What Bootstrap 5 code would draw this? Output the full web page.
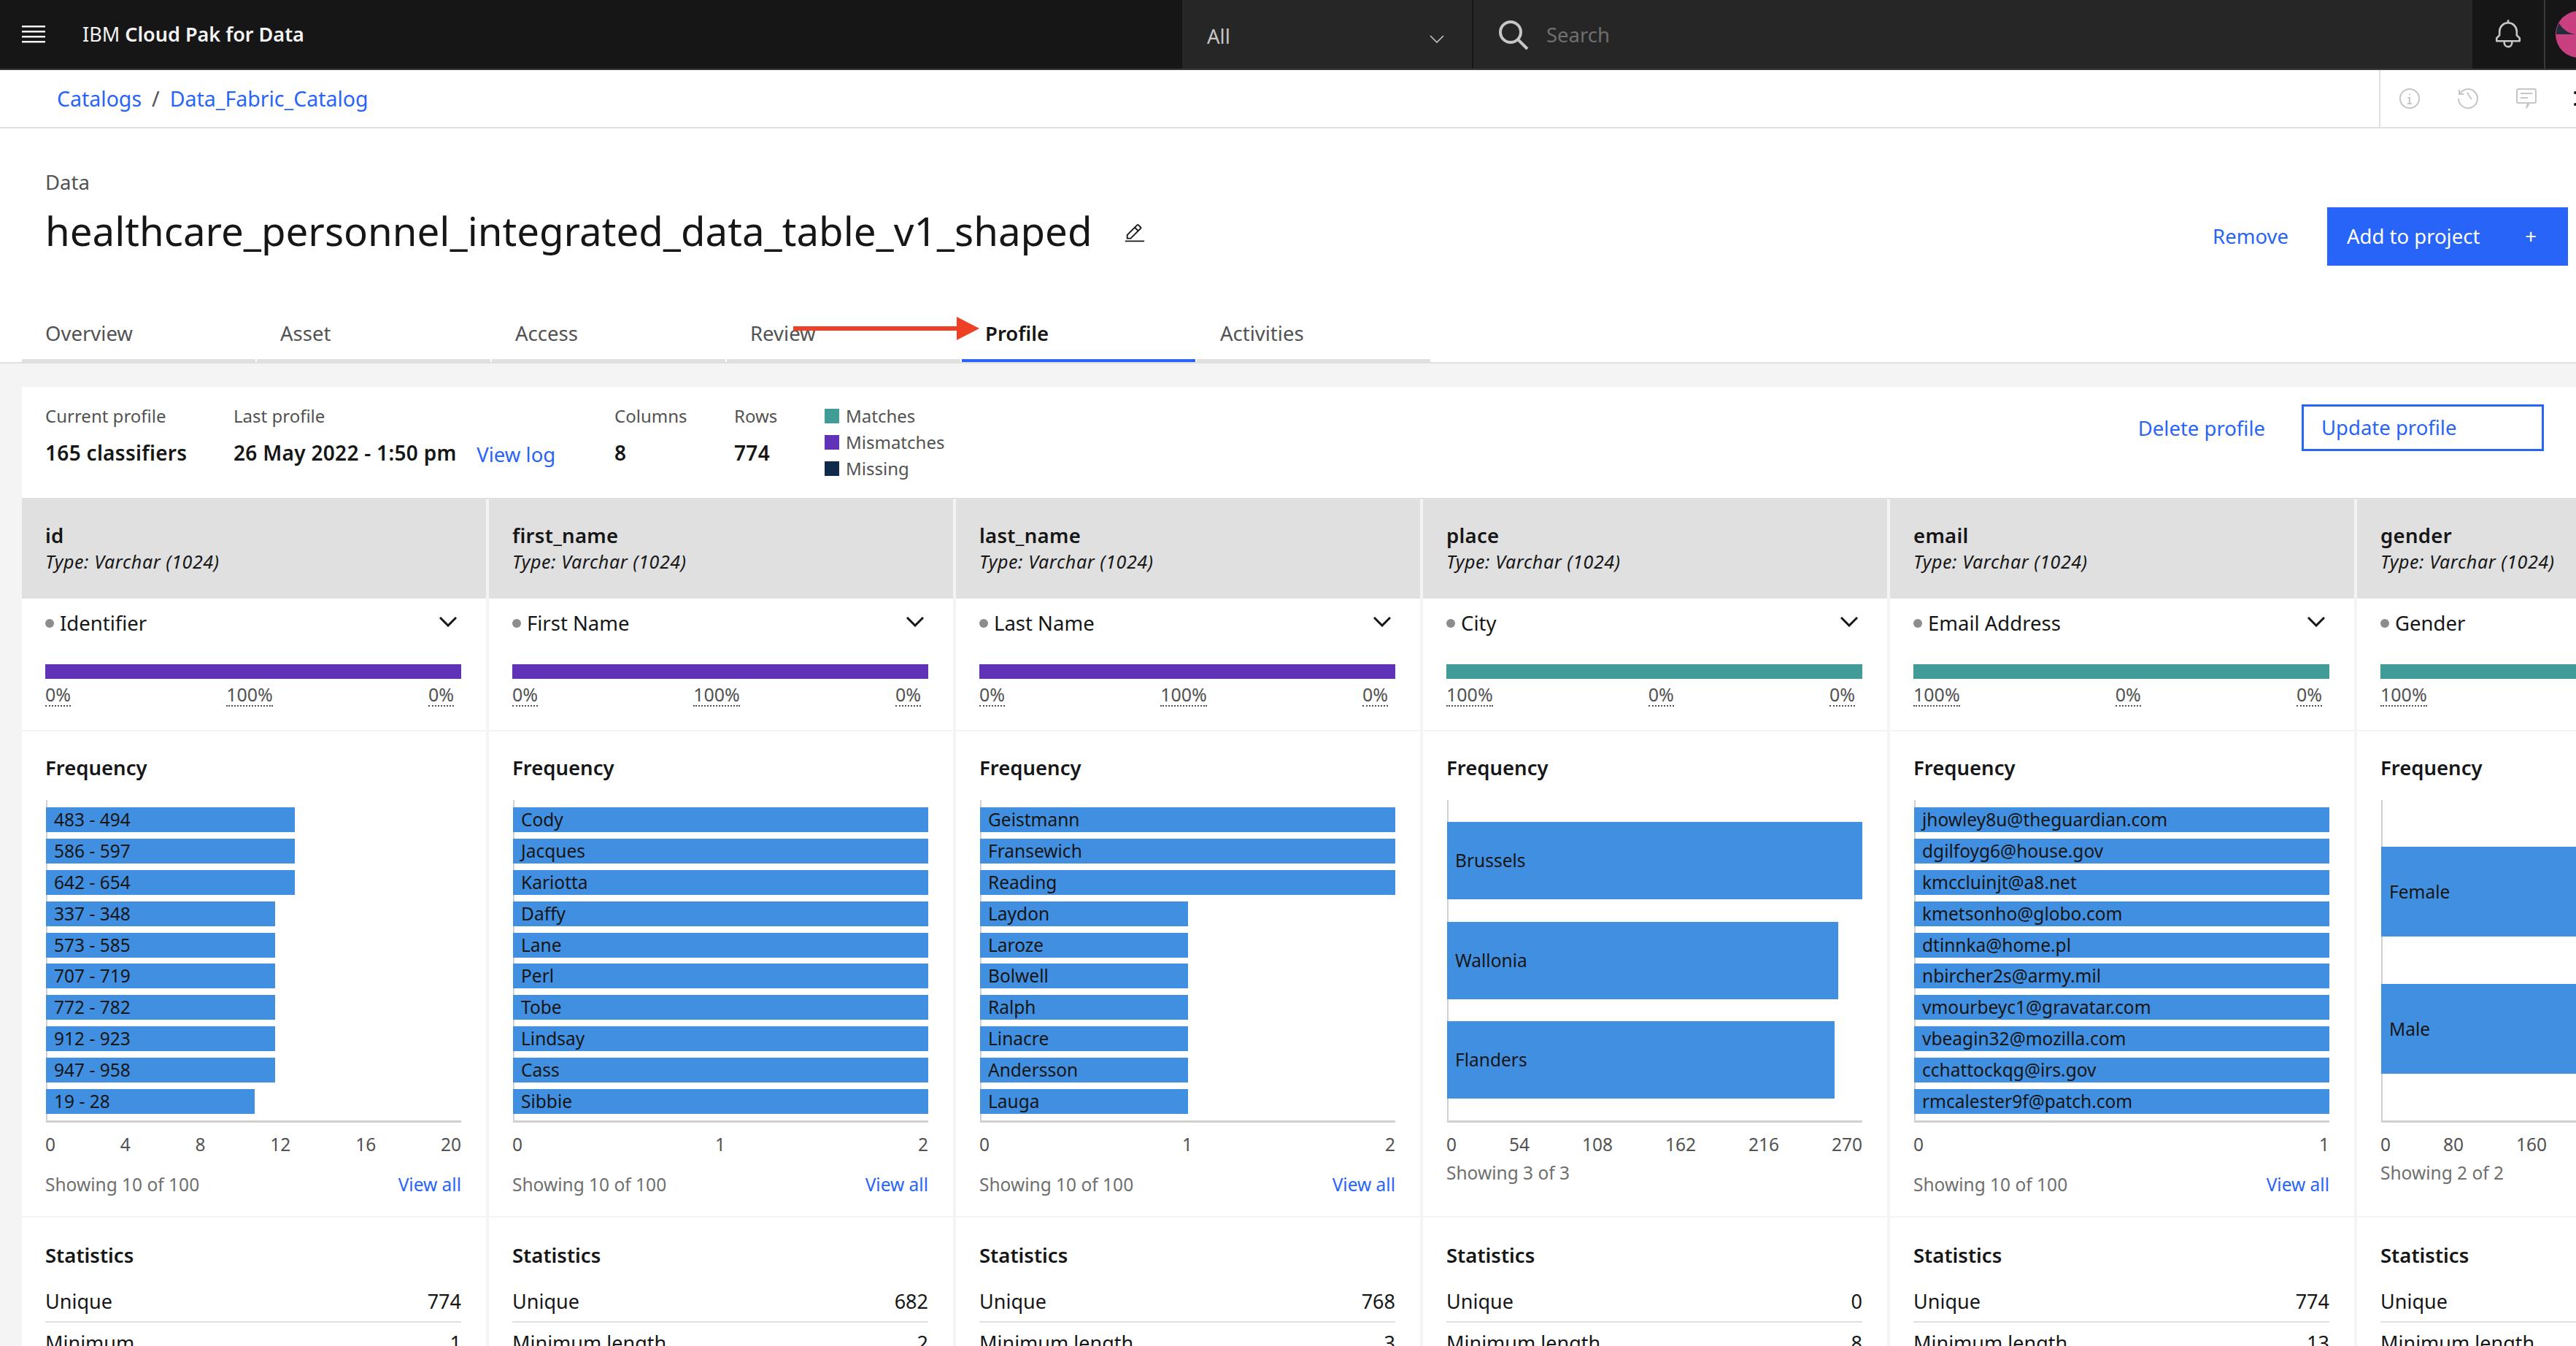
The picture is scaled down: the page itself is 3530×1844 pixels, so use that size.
<!DOCTYPE html>
<html lang="en">
<head>
<meta charset="utf-8">
<title>Profile</title>
<link href="https://cdn.jsdelivr.net/npm/bootstrap@5.3.0/dist/css/bootstrap.min.css" rel="stylesheet">
<style>
html,body{height:1844px;overflow:hidden}
body{font-family:"Noto Sans","Liberation Sans",sans-serif;font-size:27.5px;line-height:36px;color:#161616;background:#fff;position:relative}
a{color:#2864f8;text-decoration:none}
.b{font-weight:600}
.topbar{height:96px;background:#161616;border-bottom:2px solid #393939;color:#f4f4f4}
.topbar>*{flex:none}
.burger{width:32px;margin-left:30px}
.brand{margin-left:51px;width:1507px;font-size:27px}
.brand span{font-weight:600}
.scope{width:399px;height:94px;background:#262626;border-right:2px solid #161616;padding:32px 38px 0 34px;color:#c6c6c6}
.search{width:1369px;height:94px;background:#262626;padding:2px 0 0 34px;color:#6f6f6f}
.bell{width:100px;height:94px;border-right:2px solid #393939}
.avatar{margin-left:14px}
.crumbs{height:80px;border-bottom:2px solid #e0e0e0}
.crumbs .breadcrumb{--bs-breadcrumb-divider-color:#525252;--bs-breadcrumb-item-active-color:#2864f8;--bs-breadcrumb-item-padding-x:14px;margin:0 0 0 78px;font-size:28.5px}
.tools{width:270px;height:78px;border-left:2px solid #e0e0e0;padding-left:25px;gap:50px;overflow:hidden}
.tools svg{flex:none}
.head{height:240px;padding:58px 11px 0 62px}
.kicker{color:#525252;line-height:32px}
.title{font-size:54.6px;line-height:72px;margin:14px 0 0;font-weight:400}
.title svg{margin-left:44px;vertical-align:2px}
.remove{margin:72px 53px 0 0}
.cta{--bs-btn-bg:#2864f8;--bs-btn-border-color:#2864f8;--bs-btn-border-radius:0;width:330px;height:80px;padding:0 42px 0 26px;font-size:27.5px;margin-top:50px}
.tabbar{height:82px;padding-left:30px;gap:2px;border-bottom:2px solid #e0e0e0}
.tabbar .nav-link{width:320px;height:80px;padding:23px 0 0 32px;color:#525252;border-bottom:4px solid #e0e0e0}
.tabbar .nav-link.active{color:#161616;font-weight:600;border-bottom-color:#2864f8}
.arrow{position:absolute;left:1087px;top:434px}
.content{background:#f4f4f4;padding:32px 0 0 30px;height:1346px}
.panel{background:#fff;height:100%;overflow:hidden}
.summary{height:152px;padding:24px 44px 0 32px}
.small-t{font-size:24px;line-height:32px;color:#525252}
.val{font-weight:600;font-size:28px;letter-spacing:.3px;line-height:36px;margin-top:16px}
.s1{width:258px}.s2{width:522px}.s3{width:164px}.s4{width:124px}
.log{margin-left:20px;position:relative;top:2px;letter-spacing:0;font-size:27.5px}
.swatch{width:20px;height:20px;margin-right:9px;flex:none}
.legend{margin-top:-2px}
.legend div{height:36px}
.del{margin:15px 50px 0 0}
.upd{width:332px;height:64px;border:3px solid #2864f8;padding:0 0 0 24px}
.cols{gap:4px;background:#f4f4f4;border-top:2px solid #e0e0e0;width:3600px}
.col6{flex:0 0 636px;background:#fff}
.chead{height:136px;background:#e0e0e0;padding:32px 32px 0}
.chead .b{letter-spacing:.3px}
.chead .type{font-size:25px;letter-spacing:.6px;line-height:32px;font-style:italic;margin-top:1px;white-space:nowrap}
.cclass{height:182px;padding:16px 34px 0 32px;border-bottom:2px solid #f4f4f4}
.dot{width:12px;height:12px;background:#8d8d8d;margin-right:8px;flex:none}
.chev{margin:0 6px 4px auto}
.meter{height:20px;margin-top:38px}
.match{background:#419c98}.mis{background:#6032b8}.miss{background:#0f2a4a}
.pcts{font-size:25px;line-height:30px;color:#525252;margin-top:6px;padding-right:10px}
.pcts span{border-bottom:2px dotted #525252}
.cfreq{height:666px;padding:32px 34px 0 32px;border-bottom:2px solid #f4f4f4}
.chart{height:442px;margin:26px 0 0 1px;border-left:2px solid #d0d0d0;border-bottom:3px solid #d0d0d0}
.bars{height:100%;margin-left:-2px;padding:10px 0 9px}
.bar{height:34px;background:#418fe0;font-size:24.5px;line-height:34px;padding-left:11px;white-space:nowrap}
.bar.m{height:106px;line-height:106px}.bar.l{height:123px;line-height:123px}
.ticks{font-size:24.5px;line-height:30px;color:#525252;margin-top:15px}
.foot{font-size:24.5px;line-height:30px;color:#6f6f6f;margin-top:25px}
.foot.near{margin-top:9px}
.cstats{padding:34px 34px 0 32px}
.stat{height:44px;border-bottom:2px solid #e0e0e0;margin-top:30px;line-height:30px;font-size:27px}
.stat+.stat{margin-top:13px;height:auto;border:0}
.fade{position:absolute;left:0;right:0;bottom:0;height:64px;background:linear-gradient(to bottom,rgba(0,0,0,0),rgba(0,0,0,.07));border-bottom:4px solid #e6e6e6;pointer-events:none}
</style>
</head>
<body>
<header class="topbar d-flex align-items-center overflow-hidden">
  <svg class="burger" height="24" viewBox="0 0 32 24" fill="#f4f4f4"><rect y="0" width="32" height="2.5"/><rect y="7" width="32" height="2.5"/><rect y="14" width="32" height="2.5"/><rect y="21" width="32" height="2.5"/></svg>
  <div class="brand">IBM <span>Cloud Pak for Data</span></div>
  <div class="scope d-flex justify-content-between"><span>All</span><svg class="mt-3" width="20" height="11" viewBox="0 0 20 11" fill="none" stroke="#c6c6c6" stroke-width="1.6"><path d="M1 1l9 9 9-9"/></svg></div>
  <div class="search d-flex align-items-center gap-4"><svg width="42" height="42" viewBox="0 0 42 42" fill="none" stroke="#c6c6c6" stroke-width="4"><circle cx="17" cy="17" r="14"/><path d="M27 27l13 13"/></svg><span>Search</span></div>
  <div class="bell d-flex align-items-center justify-content-center"><svg width="42" height="42" viewBox="0 0 32 32" fill="#c6c6c6"><path d="M28.707 19.293 26 16.586V13a10.014 10.014 0 0 0-9-9.95V1h-2v2.05A10.014 10.014 0 0 0 6 13v3.586l-2.707 2.707A1 1 0 0 0 3 20v3a1 1 0 0 0 1 1h7v.777a5.152 5.152 0 0 0 4.5 5.199A5.006 5.006 0 0 0 21 25v-1h7a1 1 0 0 0 1-1v-3a1 1 0 0 0-.293-.707ZM19 25a3 3 0 0 1-6 0v-1h6Zm8-3H5v-1.586l2.707-2.707A1 1 0 0 0 8 17v-4a8 8 0 0 1 16 0v4a1 1 0 0 0 .293.707L27 20.414Z"/></svg></div>
  <svg class="avatar" width="64" height="64" viewBox="0 0 64 64"><circle cx="32" cy="32" r="32" fill="#c8407f"/><path d="M1 32h26C17 31 9 24 5 17 2 21 1 27 1 32z" fill="#1f2d3d"/></svg>
</header>

<div class="crumbs d-flex align-items-center justify-content-between">
  <ol class="breadcrumb"><li class="breadcrumb-item"><a href="#">Catalogs</a></li><li class="breadcrumb-item"><a href="#">Data_Fabric_Catalog</a></li></ol>
  <div class="tools d-flex align-items-center">
    <svg width="30" height="30" viewBox="0 0 30 30" fill="none" stroke="#c6c6c6" stroke-width="2"><circle cx="15" cy="15" r="13"/><path d="M12 22h6M15 22v-8h-2.5M15 8.5v1.5"/></svg>
    <svg width="30" height="30" viewBox="0 0 30 30" fill="none" stroke="#c6c6c6" stroke-width="2"><path d="M3 3v6h6M3.5 9A13 13 0 1 1 2 15M14 7l1 1 0 1 5 7"/></svg>
    <svg width="30" height="30" viewBox="0 0 30 30" fill="none" stroke="#c6c6c6" stroke-width="2"><path d="M4 2h22a2 2 0 0 1 2 2v15a2 2 0 0 1-2 2h-7l-4 7 2-7H4a2 2 0 0 1-2-2V4a2 2 0 0 1 2-2zM7 8h16M7 14h10"/></svg>
    <svg width="4" height="30" viewBox="0 0 4 30" fill="#161616"><circle cx="2" cy="7" r="2"/><circle cx="2" cy="23" r="2"/></svg>
  </div>
</div>

<section class="head d-flex justify-content-between">
  <div>
    <div class="kicker">Data</div>
    <h1 class="title">healthcare_personnel_integrated_data_table_v1_shaped<svg width="30" height="30" viewBox="0 0 32 32" fill="#161616"><path d="M2 26h28v2H2zM25.4 9c.8-.8.8-2 0-2.8l-3.6-3.6c-.8-.8-2-.8-2.8 0l-15 15V24h6.4l15-15zm-5-5L24 7.6l-3 3L17.4 7l3-3zM6 22v-3.6l10-10 3.6 3.6-10 10H6z"/></svg></h1>
  </div>
  <div class="d-flex align-items-start">
    <a class="remove" href="#">Remove</a>
    <a class="btn btn-primary cta d-flex align-items-center justify-content-between" href="#"><span>Add to project</span><span>+</span></a>
  </div>
</section>

<ul class="nav tabbar">
  <li class="nav-item"><a class="nav-link" href="#">Overview</a></li>
  <li class="nav-item"><a class="nav-link" href="#">Asset</a></li>
  <li class="nav-item"><a class="nav-link" href="#">Access</a></li>
  <li class="nav-item"><a class="nav-link" href="#">Review</a></li>
  <li class="nav-item"><a class="nav-link active" href="#">Profile</a></li>
  <li class="nav-item"><a class="nav-link" href="#">Activities</a></li>
</ul>
<svg class="arrow" width="256" height="32" viewBox="0 0 256 32" fill="#ee4025"><path d="M0 13h224V0l31 16-31 16V19H0z"/></svg>

<main class="content">
  <div class="panel">
    <div class="summary d-flex">
      <div class="s1"><div class="small-t">Current profile</div><div class="val">165 classifiers</div></div>
      <div class="s2"><div class="small-t">Last profile</div><div class="val">26 May 2022 - 1:50 pm <a class="log fw-normal" href="#">View log</a></div></div>
      <div class="s3"><div class="small-t">Columns</div><div class="val">8</div></div>
      <div class="s4"><div class="small-t">Rows</div><div class="val">774</div></div>
      <div class="legend small-t"><div class="d-flex align-items-center"><span class="swatch match"></span>Matches</div><div class="d-flex align-items-center"><span class="swatch mis"></span>Mismatches</div><div class="d-flex align-items-center"><span class="swatch miss"></span>Missing</div></div>
      <div class="ms-auto d-flex align-items-start"><a class="del" href="#">Delete profile</a><a class="upd d-flex align-items-center" href="#">Update profile</a></div>
    </div>
    <div class="cols d-flex">

      <div class="col6">
        <div class="chead"><div class="b">id</div><div class="type">Type: Varchar (1024)</div></div>
        <div class="cclass"><div class="d-flex align-items-center"><span class="dot rounded-circle"></span>Identifier<svg class="chev" width="24" height="14" viewBox="0 0 24 14" fill="none" stroke="#161616" stroke-width="3"><path d="M1 1l11 11L23 1"/></svg></div><div class="meter mis"></div><div class="pcts d-flex justify-content-between"><span>0%</span><span>100%</span><span>0%</span></div></div>
        <div class="cfreq"><div class="b">Frequency</div><div class="chart"><div class="bars d-flex flex-column justify-content-between">
          <div class="bar" style="width:60%">483 - 494</div><div class="bar" style="width:60%">586 - 597</div><div class="bar" style="width:60%">642 - 654</div><div class="bar" style="width:55.2%">337 - 348</div><div class="bar" style="width:55.2%">573 - 585</div><div class="bar" style="width:55.2%">707 - 719</div><div class="bar" style="width:55.2%">772 - 782</div><div class="bar" style="width:55.2%">912 - 923</div><div class="bar" style="width:55.2%">947 - 958</div><div class="bar" style="width:50.2%">19 - 28</div>
        </div></div><div class="ticks d-flex justify-content-between"><span>0</span><span>4</span><span>8</span><span>12</span><span>16</span><span>20</span></div><div class="foot d-flex justify-content-between"><span>Showing 10 of 100</span><a href="#">View all</a></div></div>
        <div class="cstats"><div class="b">Statistics</div><div class="stat d-flex justify-content-between"><span>Unique</span><span>774</span></div><div class="stat d-flex justify-content-between"><span>Minimum</span><span>1</span></div></div>
      </div>

      <div class="col6">
        <div class="chead"><div class="b">first_name</div><div class="type">Type: Varchar (1024)</div></div>
        <div class="cclass"><div class="d-flex align-items-center"><span class="dot rounded-circle"></span>First Name<svg class="chev" width="24" height="14" viewBox="0 0 24 14" fill="none" stroke="#161616" stroke-width="3"><path d="M1 1l11 11L23 1"/></svg></div><div class="meter mis"></div><div class="pcts d-flex justify-content-between"><span>0%</span><span>100%</span><span>0%</span></div></div>
        <div class="cfreq"><div class="b">Frequency</div><div class="chart"><div class="bars d-flex flex-column justify-content-between">
          <div class="bar">Cody</div><div class="bar">Jacques</div><div class="bar">Kariotta</div><div class="bar">Daffy</div><div class="bar">Lane</div><div class="bar">Perl</div><div class="bar">Tobe</div><div class="bar">Lindsay</div><div class="bar">Cass</div><div class="bar">Sibbie</div>
        </div></div><div class="ticks d-flex justify-content-between"><span>0</span><span>1</span><span>2</span></div><div class="foot d-flex justify-content-between"><span>Showing 10 of 100</span><a href="#">View all</a></div></div>
        <div class="cstats"><div class="b">Statistics</div><div class="stat d-flex justify-content-between"><span>Unique</span><span>682</span></div><div class="stat d-flex justify-content-between"><span>Minimum length</span><span>2</span></div></div>
      </div>

      <div class="col6">
        <div class="chead"><div class="b">last_name</div><div class="type">Type: Varchar (1024)</div></div>
        <div class="cclass"><div class="d-flex align-items-center"><span class="dot rounded-circle"></span>Last Name<svg class="chev" width="24" height="14" viewBox="0 0 24 14" fill="none" stroke="#161616" stroke-width="3"><path d="M1 1l11 11L23 1"/></svg></div><div class="meter mis"></div><div class="pcts d-flex justify-content-between"><span>0%</span><span>100%</span><span>0%</span></div></div>
        <div class="cfreq"><div class="b">Frequency</div><div class="chart"><div class="bars d-flex flex-column justify-content-between">
          <div class="bar">Geistmann</div><div class="bar">Fransewich</div><div class="bar">Reading</div><div class="bar" style="width:50%">Laydon</div><div class="bar" style="width:50%">Laroze</div><div class="bar" style="width:50%">Bolwell</div><div class="bar" style="width:50%">Ralph</div><div class="bar" style="width:50%">Linacre</div><div class="bar" style="width:50%">Andersson</div><div class="bar" style="width:50%">Lauga</div>
        </div></div><div class="ticks d-flex justify-content-between"><span>0</span><span>1</span><span>2</span></div><div class="foot d-flex justify-content-between"><span>Showing 10 of 100</span><a href="#">View all</a></div></div>
        <div class="cstats"><div class="b">Statistics</div><div class="stat d-flex justify-content-between"><span>Unique</span><span>768</span></div><div class="stat d-flex justify-content-between"><span>Minimum length</span><span>3</span></div></div>
      </div>

      <div class="col6">
        <div class="chead"><div class="b">place</div><div class="type">Type: Varchar (1024)</div></div>
        <div class="cclass"><div class="d-flex align-items-center"><span class="dot rounded-circle"></span>City<svg class="chev" width="24" height="14" viewBox="0 0 24 14" fill="none" stroke="#161616" stroke-width="3"><path d="M1 1l11 11L23 1"/></svg></div><div class="meter match"></div><div class="pcts d-flex justify-content-between"><span>100%</span><span>0%</span><span>0%</span></div></div>
        <div class="cfreq"><div class="b">Frequency</div><div class="chart"><div class="bars d-flex flex-column justify-content-evenly p-0">
          <div class="bar m">Brussels</div><div class="bar m" style="width:94.2%">Wallonia</div><div class="bar m" style="width:93.3%">Flanders</div>
        </div></div><div class="ticks d-flex justify-content-between"><span>0</span><span>54</span><span>108</span><span>162</span><span>216</span><span>270</span></div><div class="foot near">Showing 3 of 3</div></div>
        <div class="cstats"><div class="b">Statistics</div><div class="stat d-flex justify-content-between"><span>Unique</span><span>0</span></div><div class="stat d-flex justify-content-between"><span>Minimum length</span><span>8</span></div></div>
      </div>

      <div class="col6">
        <div class="chead"><div class="b">email</div><div class="type">Type: Varchar (1024)</div></div>
        <div class="cclass"><div class="d-flex align-items-center"><span class="dot rounded-circle"></span>Email Address<svg class="chev" width="24" height="14" viewBox="0 0 24 14" fill="none" stroke="#161616" stroke-width="3"><path d="M1 1l11 11L23 1"/></svg></div><div class="meter match"></div><div class="pcts d-flex justify-content-between"><span>100%</span><span>0%</span><span>0%</span></div></div>
        <div class="cfreq"><div class="b">Frequency</div><div class="chart"><div class="bars d-flex flex-column justify-content-between">
          <div class="bar">jhowley8u@theguardian.com</div><div class="bar">dgilfoyg6@house.gov</div><div class="bar">kmccluinjt@a8.net</div><div class="bar">kmetsonho@globo.com</div><div class="bar">dtinnka@home.pl</div><div class="bar">nbircher2s@army.mil</div><div class="bar">vmourbeyc1@gravatar.com</div><div class="bar">vbeagin32@mozilla.com</div><div class="bar">cchattockqg@irs.gov</div><div class="bar">rmcalester9f@patch.com</div>
        </div></div><div class="ticks d-flex justify-content-between"><span>0</span><span>1</span></div><div class="foot d-flex justify-content-between"><span>Showing 10 of 100</span><a href="#">View all</a></div></div>
        <div class="cstats"><div class="b">Statistics</div><div class="stat d-flex justify-content-between"><span>Unique</span><span>774</span></div><div class="stat d-flex justify-content-between"><span>Minimum length</span><span>13</span></div></div>
      </div>

      <div class="col6">
        <div class="chead"><div class="b">gender</div><div class="type">Type: Varchar (1024)</div></div>
        <div class="cclass"><div class="d-flex align-items-center"><span class="dot rounded-circle"></span>Gender</div><div class="meter match"></div><div class="pcts d-flex justify-content-between"><span>100%</span><span>0%</span><span>0%</span></div></div>
        <div class="cfreq"><div class="b">Frequency</div><div class="chart"><div class="bars d-flex flex-column justify-content-evenly p-0">
          <div class="bar l">Female</div><div class="bar l">Male</div>
        </div></div><div class="ticks d-flex justify-content-between"><span>0</span><span>80</span><span>160</span><span>240</span><span>320</span><span>400</span></div><div class="foot near">Showing 2 of 2</div></div>
        <div class="cstats"><div class="b">Statistics</div><div class="stat"><span>Unique</span></div><div class="stat"><span>Minimum length</span></div></div>
      </div>

    </div>
  </div>
</main>
<div class="fade"></div>
</body>
</html>
